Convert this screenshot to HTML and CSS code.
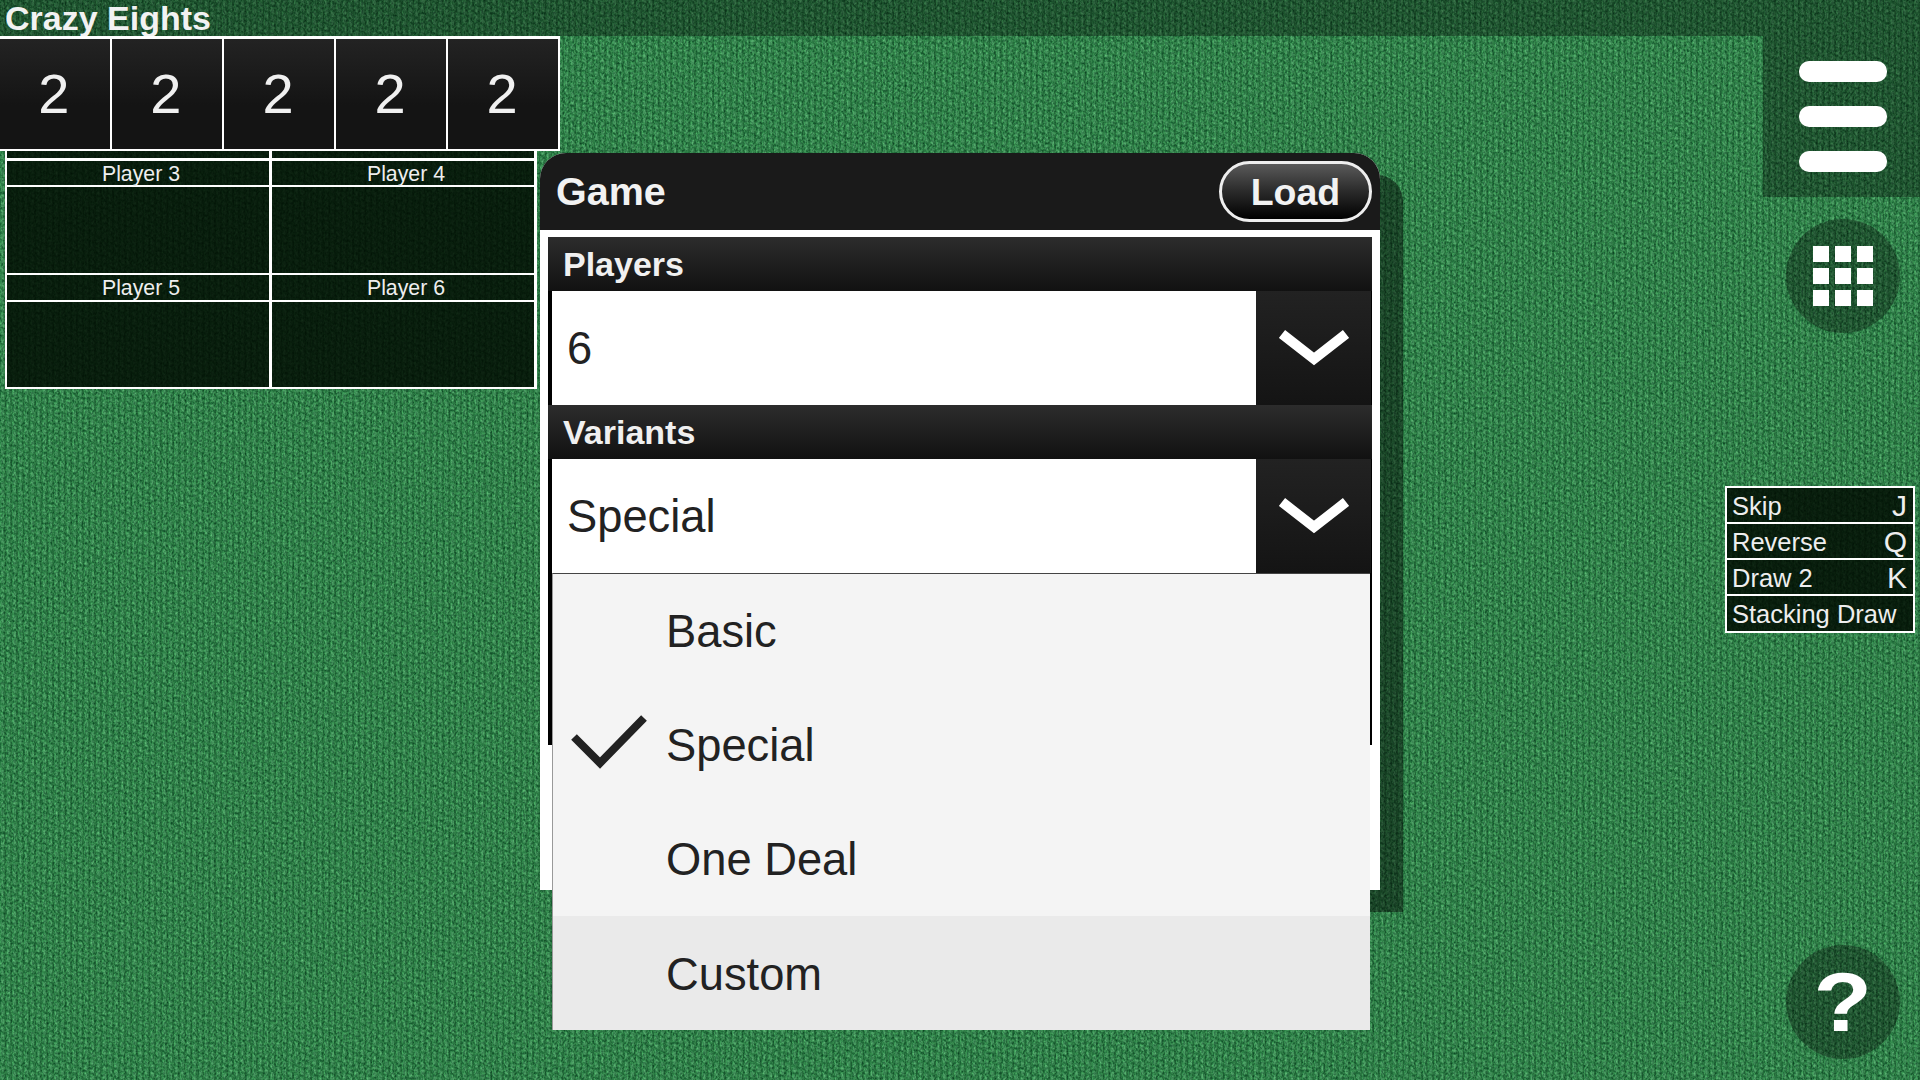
FILE: index.html
```html
<!DOCTYPE html>
<html lang="en">
<head>
  <meta charset="UTF-8" />
  <title>Crazy Eights</title>
  <link rel="stylesheet" href="styles.css">
</head>
<body>
  <svg class="felt" width="1920" height="1080" aria-hidden="true">
    <filter id="weave" x="0" y="0" width="100%" height="100%" color-interpolation-filters="sRGB">
      <feTurbulence type="fractalNoise" baseFrequency="0.55 0.4" numOctaves="2" seed="4"/>
      <feColorMatrix type="matrix" values="0.36 0 0 0 0  0.56 0 0 0 0.235  0.36 0 0 0 0.105  0 0 0 0 1"/>
    </filter>
    <pattern id="stitch" width="6" height="8" patternUnits="userSpaceOnUse" patternTransform="skewY(25)">
      <rect x="4" y="0" width="2" height="8" fill="#000" opacity="0.15"/>
      <rect x="1" y="1" width="3" height="5" fill="#fff" opacity="0.09"/>
      <rect x="0" y="6" width="4" height="2" fill="#000" opacity="0.08"/>
    </pattern>
    <rect width="1920" height="1080" filter="url(#weave)"/>
    <rect width="1920" height="1080" fill="url(#stitch)"/>
  </svg>

  <div class="page">
    <div class="title-bar">Crazy Eights</div>
    <div class="main">
      <div class="left">
        <div class="scores">
          <div class="score">2</div>
          <div class="score">2</div>
          <div class="score">2</div>
          <div class="score">2</div>
          <div class="score">2</div>
        </div>
        <div class="seats">
          <div class="stub"></div>
          <div class="stub"></div>
          <div class="seat first"><div class="seat-name">Player 3</div><div class="seat-cards"></div></div>
          <div class="seat first"><div class="seat-name">Player 4</div><div class="seat-cards"></div></div>
          <div class="seat"><div class="seat-name">Player 5</div><div class="seat-cards"></div></div>
          <div class="seat"><div class="seat-name">Player 6</div><div class="seat-cards"></div></div>
        </div>
      </div>

      <div class="side">
        <div class="menu-panel">
          <span class="menu-bar"></span>
          <span class="menu-bar"></span>
          <span class="menu-bar"></span>
        </div>
        <div class="round-btn grid-btn">
          <div class="dots">
            <i></i><i></i><i></i>
            <i></i><i></i><i></i>
            <i></i><i></i><i></i>
          </div>
        </div>
        <div class="rules">
          <div class="rule"><span>Skip</span><span class="rule-key">J</span></div>
          <div class="rule"><span>Reverse</span><span class="rule-key">Q</span></div>
          <div class="rule"><span>Draw 2</span><span class="rule-key">K</span></div>
          <div class="rule"><span>Stacking Draw</span></div>
        </div>
        <div class="round-btn help-btn"><span class="help-mark">?</span></div>
      </div>
    </div>
  </div>

  <div class="dialog">
    <div class="dialog-head">
      <span class="dialog-title">Game</span>
      <button class="load-btn">Load</button>
    </div>
    <div class="dialog-body">
      <div class="field-label">Players</div>
      <div class="field">
        <div class="field-value">6</div>
        <div class="field-arrow">
          <svg width="70" height="38" viewBox="0 0 70 38"><polyline points="3,5 35,30 67,5" fill="none" stroke="#fff" stroke-width="10"/></svg>
        </div>
      </div>
      <div class="field-label">Variants</div>
      <div class="field">
        <div class="field-value">Special</div>
        <div class="field-arrow">
          <svg width="70" height="38" viewBox="0 0 70 38"><polyline points="3,5 35,30 67,5" fill="none" stroke="#fff" stroke-width="10"/></svg>
        </div>
      </div>
    </div>

    <div class="options">
      <div class="option">Basic</div>
      <div class="option">
        <svg class="check" width="78" height="58" viewBox="0 0 78 58"><polyline points="4,23 30,49 74,4" fill="none" stroke="#222" stroke-width="8"/></svg>
        Special
      </div>
      <div class="option">One Deal</div>
      <div class="option active">Custom</div>
    </div>
  </div>
</body>
</html>
```

FILE: styles.css
```css
body { margin: 0; width: 1920px; height: 1080px; overflow: hidden; background: #2b7d45; font-family: "Liberation Sans", Arial, sans-serif; color: #fff; }
.felt { position: absolute; left: 0; top: 0; }
.page { position: relative; display: flex; flex-direction: column; height: 1080px; }

.title-bar { height: 36px; padding-left: 5px; background: rgba(0, 0, 0, 0.33); font-size: 34px; font-weight: bold; line-height: 36px; color: #f2f2f2; white-space: nowrap; }
.main { display: flex; justify-content: space-between; flex: 1; }

.left { width: 560px; }
.scores { display: grid; grid-template-columns: repeat(5, 1fr); gap: 2.4px; padding: 3px 2px 2px 0; background: #fff; }
.score { box-sizing: border-box; height: 110px; padding-right: 2px; background: linear-gradient(#232323, #141414 60%); font-size: 56px; line-height: 110px; text-align: center; color: #f0f0f0; }

.seats { display: grid; grid-template-columns: 265px 265px; width: 530px; margin-left: 5px; border-left: 2px solid #fff; border-bottom: 2px solid #fff; }
.stub { height: 7px; background: rgba(0, 8, 0, 0.82); border-right: 3px solid #fff; }
.seat { border-right: 3px solid #fff; }
.seat-name { height: 25px; padding-left: 6px; border-top: 2px solid #fff; border-bottom: 2px solid #fff; background: rgba(0, 8, 0, 0.82); font-size: 21.3px; line-height: 27px; text-align: center; color: #eee; }
.seat-cards { height: 85px; background: rgba(0, 8, 0, 0.82); }
.seat.first .seat-name { height: 24px; border-top-width: 3px; line-height: 26px; }
.seat.first .seat-cards { height: 86px; }

.side { display: flex; flex-direction: column; align-items: flex-end; }
.menu-panel { display: flex; flex-direction: column; justify-content: space-between; align-items: center; box-sizing: border-box; width: 157px; height: 161px; padding: 25px 0 25px 3px; background: rgba(0, 0, 0, 0.33); }
.menu-bar { width: 88px; height: 21px; border-radius: 10px; background: #fff; }
.round-btn { display: flex; align-items: center; justify-content: center; width: 114px; height: 114px; margin-right: 20px; border-radius: 50%; background: rgba(0, 0, 0, 0.33); }
.grid-btn { margin-top: 22px; }
.dots { display: grid; grid-template-columns: repeat(3, 16px); grid-auto-rows: 16px; gap: 6.4px; }
.dots i { background: #fff; }
.help-btn { margin-top: auto; margin-bottom: 21px; font-size: 84px; font-weight: bold; line-height: 1; }
.help-mark { transform: scaleX(1.14); }

.rules { box-sizing: border-box; width: 190px; margin-top: 153px; margin-right: 5px; border: 2px solid #fff; }
.rule { display: flex; justify-content: space-between; box-sizing: border-box; height: 36px; padding: 0 6px 0 5px; background: rgba(0, 8, 0, 0.82); border-bottom: 2px solid #fff; font-size: 25.5px; line-height: 36px; color: #eee; white-space: nowrap; }
.rule:last-child { border-bottom: 0; height: 35px; }
.rule-key { font-size: 30px; line-height: 35px; }

.dialog { position: absolute; left: 540px; top: 153px; box-sizing: border-box; width: 840px; height: 737px; background: #fff; border-radius: 26px 26px 0 0; box-shadow: 23px 22px 0 rgba(0, 0, 0, 0.45); }
.dialog-head { display: flex; justify-content: space-between; align-items: center; box-sizing: border-box; height: 77px; padding: 0 8px 0 16px; background: #1a1a1a; border-radius: 26px 26px 0 0; }
.dialog-title { font-size: 39.5px; font-weight: bold; color: #f2f2f2; }
.load-btn { box-sizing: border-box; width: 153px; height: 61px; padding: 2px 0 0; border: 3px solid #eee; border-radius: 31px; background: linear-gradient(#5a5a5a, #2a2a2a 50%, #000); font-family: inherit; font-size: 37.5px; font-weight: bold; color: #f2f2f2; }

.dialog-body { box-sizing: border-box; width: 824px; height: 508px; margin: 7px 8px 0; background: #000; }
.field-label { box-sizing: border-box; height: 54px; padding-left: 15px; background: linear-gradient(#2c2c2c, #111); font-size: 34px; font-weight: bold; line-height: 54px; color: #f0f0f0; }
.field { display: flex; height: 114px; padding: 0 1px 0 4px; }
.field-value { flex: 1; padding-left: 15px; background: #fff; font-size: 45.3px; line-height: 115px; color: #222; }
.field-arrow { display: flex; align-items: center; justify-content: center; width: 115px; background: linear-gradient(#222, #141414); }

.options { position: absolute; left: 12px; top: 420px; box-sizing: border-box; width: 818px; border-top: 1px solid #444; border-left: 1px solid #999; background: #f4f4f4; }
.option { position: relative; height: 114px; padding-left: 113px; font-size: 45.3px; line-height: 116px; color: #222; }
.option.active { background: #eaeaea; line-height: 118px; }
.check { position: absolute; left: 17px; top: 26px; }
```
